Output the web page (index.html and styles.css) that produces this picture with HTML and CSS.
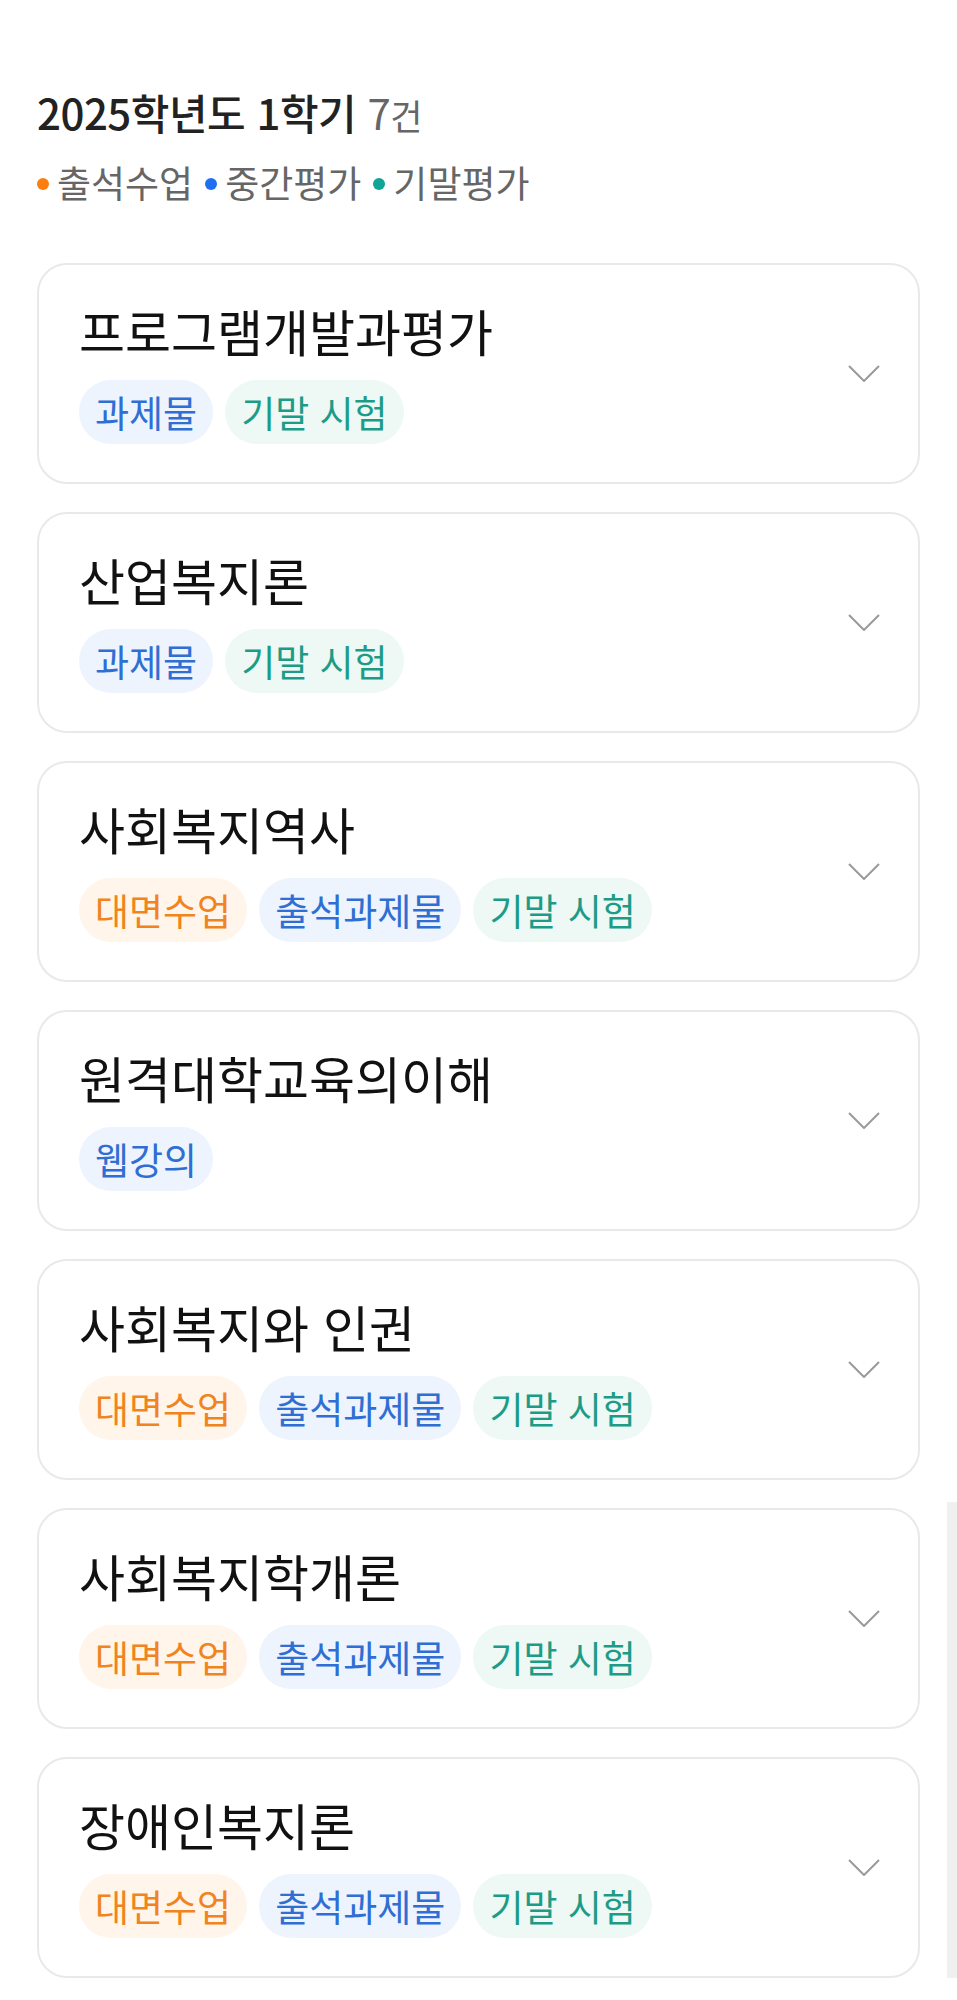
FILE: index.html
```html
<!DOCTYPE html>
<html lang="ko">
<head>
	<meta charset="UTF-8">
	<title>2025학년도 1학기 수강과목</title>
	<link rel="stylesheet" href="styles.css">
</head>
<body>
<div class="page">
	<div class="head">
		<h2 class="term">2025학년도 1학기 <span class="count">7<em>건</em></span></h2>
		<ul class="legend">
			<li><i class="dot orange"></i>출석수업</li>
			<li><i class="dot blue"></i>중간평가</li>
			<li><i class="dot teal"></i>기말평가</li>
		</ul>
	</div>

	<ul class="courses">
		<li class="course">
			<div class="info">
				<h3>프로그램개발과평가</h3>
				<div class="tags"><span class="tag blue">과제물</span><span class="tag teal">기말 시험</span></div>
			</div>
			<svg class="arrow" width="32" height="17" viewBox="0 0 32 17"><polyline points="1,1 16,16 31,1"/></svg>
		</li>
		<li class="course">
			<div class="info">
				<h3>산업복지론</h3>
				<div class="tags"><span class="tag blue">과제물</span><span class="tag teal">기말 시험</span></div>
			</div>
			<svg class="arrow" width="32" height="17" viewBox="0 0 32 17"><polyline points="1,1 16,16 31,1"/></svg>
		</li>
		<li class="course">
			<div class="info">
				<h3>사회복지역사</h3>
				<div class="tags"><span class="tag orange">대면수업</span><span class="tag blue">출석과제물</span><span class="tag teal">기말 시험</span></div>
			</div>
			<svg class="arrow" width="32" height="17" viewBox="0 0 32 17"><polyline points="1,1 16,16 31,1"/></svg>
		</li>
		<li class="course">
			<div class="info">
				<h3>원격대학교육의이해</h3>
				<div class="tags"><span class="tag blue">웹강의</span></div>
			</div>
			<svg class="arrow" width="32" height="17" viewBox="0 0 32 17"><polyline points="1,1 16,16 31,1"/></svg>
		</li>
		<li class="course">
			<div class="info">
				<h3>사회복지와 인권</h3>
				<div class="tags"><span class="tag orange">대면수업</span><span class="tag blue">출석과제물</span><span class="tag teal">기말 시험</span></div>
			</div>
			<svg class="arrow" width="32" height="17" viewBox="0 0 32 17"><polyline points="1,1 16,16 31,1"/></svg>
		</li>
		<li class="course">
			<div class="info">
				<h3>사회복지학개론</h3>
				<div class="tags"><span class="tag orange">대면수업</span><span class="tag blue">출석과제물</span><span class="tag teal">기말 시험</span></div>
			</div>
			<svg class="arrow" width="32" height="17" viewBox="0 0 32 17"><polyline points="1,1 16,16 31,1"/></svg>
		</li>
		<li class="course">
			<div class="info">
				<h3>장애인복지론</h3>
				<div class="tags"><span class="tag orange">대면수업</span><span class="tag blue">출석과제물</span><span class="tag teal">기말 시험</span></div>
			</div>
			<svg class="arrow" width="32" height="17" viewBox="0 0 32 17"><polyline points="1,1 16,16 31,1"/></svg>
		</li>
	</ul>
</div>
<div class="scroll-track"></div>
</body>
</html>
```

FILE: styles.css
```css
*{
	margin: 0;
	padding: 0;
	box-sizing: border-box;
}
li{
	list-style: none;
}
body{
	background: #fff;
	font-family: "Noto Sans CJK KR", "Noto Sans", sans-serif;
	color: #111;
	position: relative;
}
.page{
	padding: 86px 37px 0 37px;
}
.head{
	margin-bottom: 57px;
}
.term{
	font-size: 42px;
	font-weight: 500;
	line-height: 52px;
	color: #222;
	letter-spacing: -0.5px;
}
.count{
	color: #666;
	font-weight: 400;
}
.count em{
	font-style: normal;
	font-size: 35px;
}
.legend{
	display: flex;
	gap: 12px;
	margin-top: 17px;
	margin-left: 0;
}
.legend li{
	display: flex;
	align-items: center;
	font-size: 37px;
	line-height: 48px;
	color: #666;
}
.dot{
	width: 12px;
	height: 12px;
	border-radius: 50%;
	margin-right: 8px;
	margin-top: 4px;
}
.dot.orange{
	background: #fb7f0f;
}
.dot.blue{
	background: #1f6ff0;
}
.dot.teal{
	background: #12a496;
}
.courses{
	display: flex;
	flex-direction: column;
	gap: 28px;
}
.course{
	height: 221px;
	border: 2px solid #e9e9e9;
	border-radius: 30px;
	padding: 35px 38px 0 40px;
	display: flex;
	align-items: flex-start;
	background: #fff;
}
.info{
	flex: 1;
}
.info h3{
	font-size: 50px;
	font-weight: 400;
	line-height: 60px;
	color: #111;
}
.tags{
	display: flex;
	gap: 12px;
	margin-top: 20px;
}
.tag{
	height: 64px;
	line-height: 64px;
	padding: 0 16px;
	border-radius: 32px;
	font-size: 37px;
}
.tag.orange{
	background: #fff5eb;
	color: #ef8420;
}
.tag.blue{
	background: #eef4fd;
	color: #2f6fd3;
}
.tag.teal{
	background: #eef8f5;
	color: #1c9c86;
}
.arrow{
	fill: none;
	stroke: #9a9a9a;
	stroke-width: 2;
	margin-top: 65px;
}
.scroll-track{
	position: absolute;
	right: 0;
	top: 1502px;
	width: 10px;
	height: 498px;
	background: #f0f0f0;
}
```
